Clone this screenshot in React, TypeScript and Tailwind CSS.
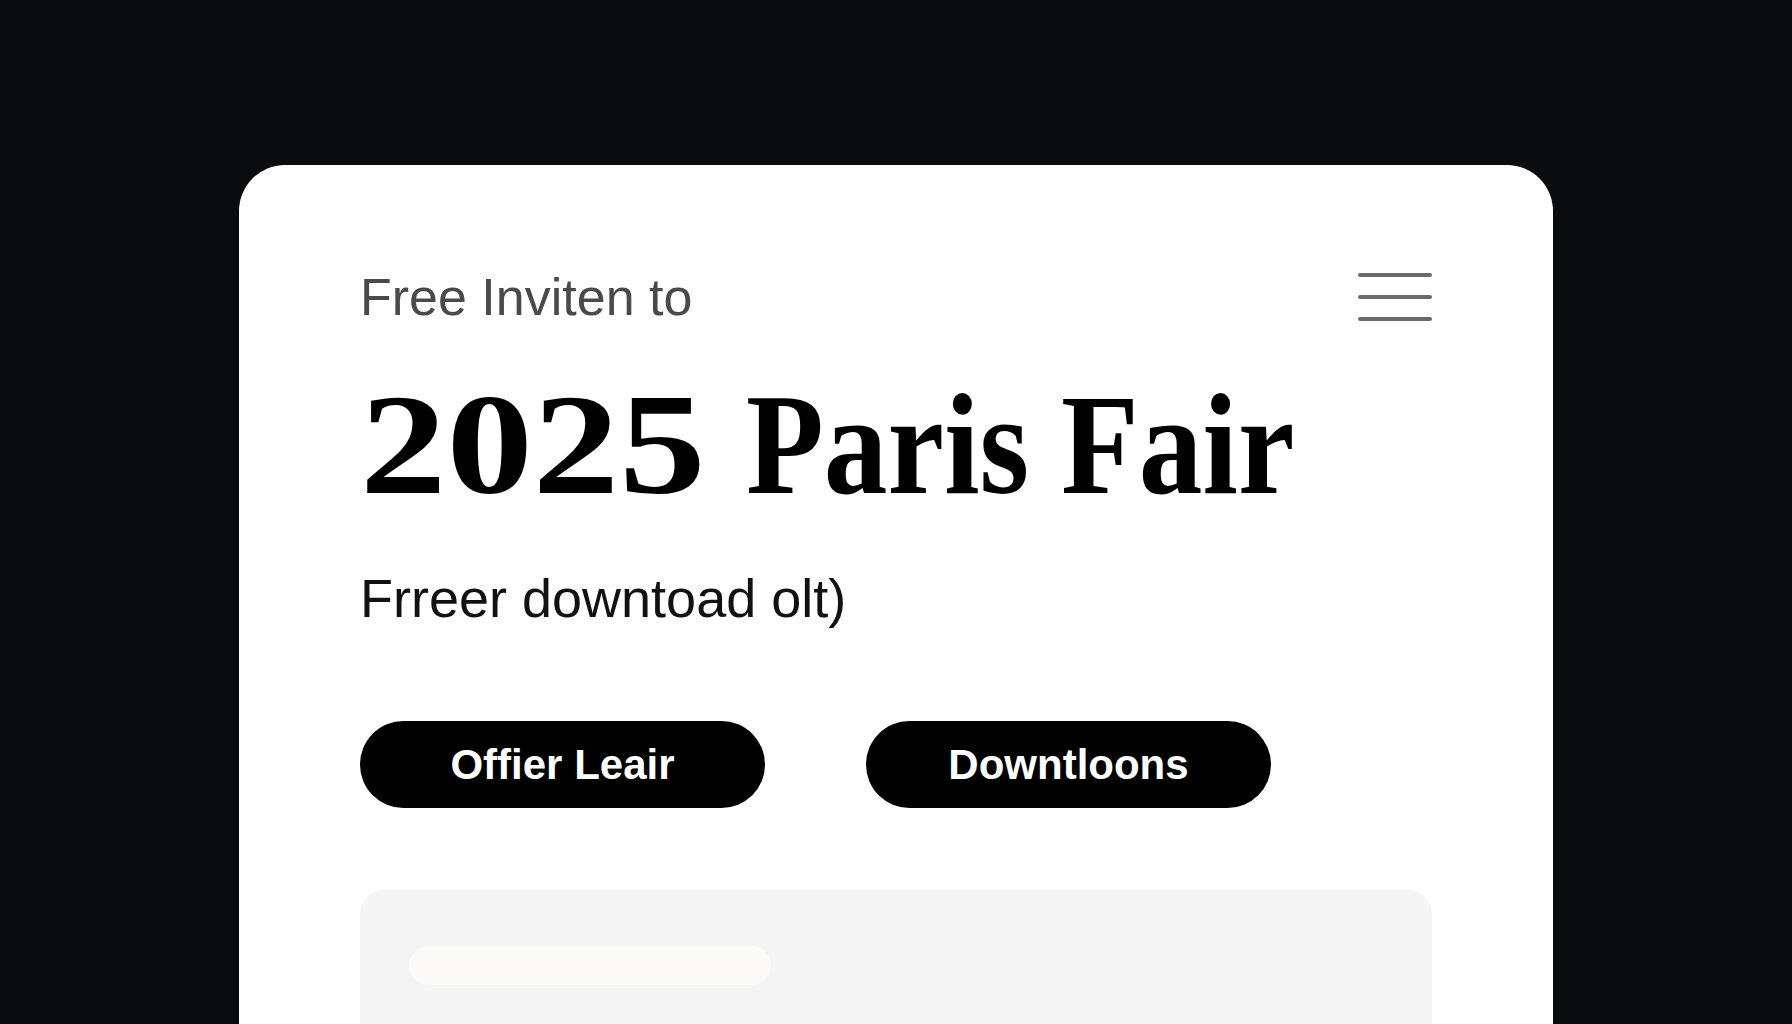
export default function App() {
  return (
    <div className="h-screen w-full overflow-hidden bg-[#0b0c10] pt-[165px] px-[239px]">
      <div className="h-[900px] rounded-t-[46px] bg-white px-[121px] pt-[106px]">
        {/* Header */}
        <div className="flex items-center justify-between">
          <p className="text-[52px] leading-none text-[#4a4a4a] font-['Liberation_Sans',Arial,sans-serif]">
            Free Inviten to
          </p>
          <button aria-label="Menu" className="flex w-[74px] flex-col gap-[18px]">
            <span className="block h-[4px] w-full rounded-full bg-[#6b6b6b]" />
            <span className="block h-[4px] w-full rounded-full bg-[#6b6b6b]" />
            <span className="block h-[4px] w-full rounded-full bg-[#6b6b6b]" />
          </button>
        </div>

        {/* Title */}
        <h1 className="mt-[50px] flex items-baseline whitespace-nowrap text-[144px] font-bold leading-none text-black font-['Liberation_Serif','Times_New_Roman',serif]">
          <span className="mr-[98px] inline-block origin-left scale-x-[1.2]">2025</span>
          <span className="inline-block origin-left scale-x-[0.885]">Paris Fair</span>
        </h1>

        <p className="mt-[54px] text-[54px] leading-none text-[#111] font-['Liberation_Sans',Arial,sans-serif]">
          Frreer downtoad olt)
        </p>

        {/* Actions */}
        <div className="mt-[96px] flex gap-[101px]">
          <button className="flex h-[87px] w-[405px] items-center justify-center rounded-full bg-black text-[42px] font-bold text-white font-['Liberation_Sans',Arial,sans-serif]">
            Offier Leair
          </button>
          <button className="flex h-[87px] w-[405px] items-center justify-center rounded-full bg-black text-[42px] font-bold text-white font-['Liberation_Sans',Arial,sans-serif]">
            Downtloons
          </button>
        </div>

        {/* Preview panel */}
        <div className="mt-[82px] h-[300px] rounded-t-[24px] bg-[#f6f5f5] pl-[49px] pt-[56px]">
          <div className="h-[39px] w-[362px] rounded-full bg-[#fbfaf7]" />
        </div>
      </div>
    </div>
  )
}
